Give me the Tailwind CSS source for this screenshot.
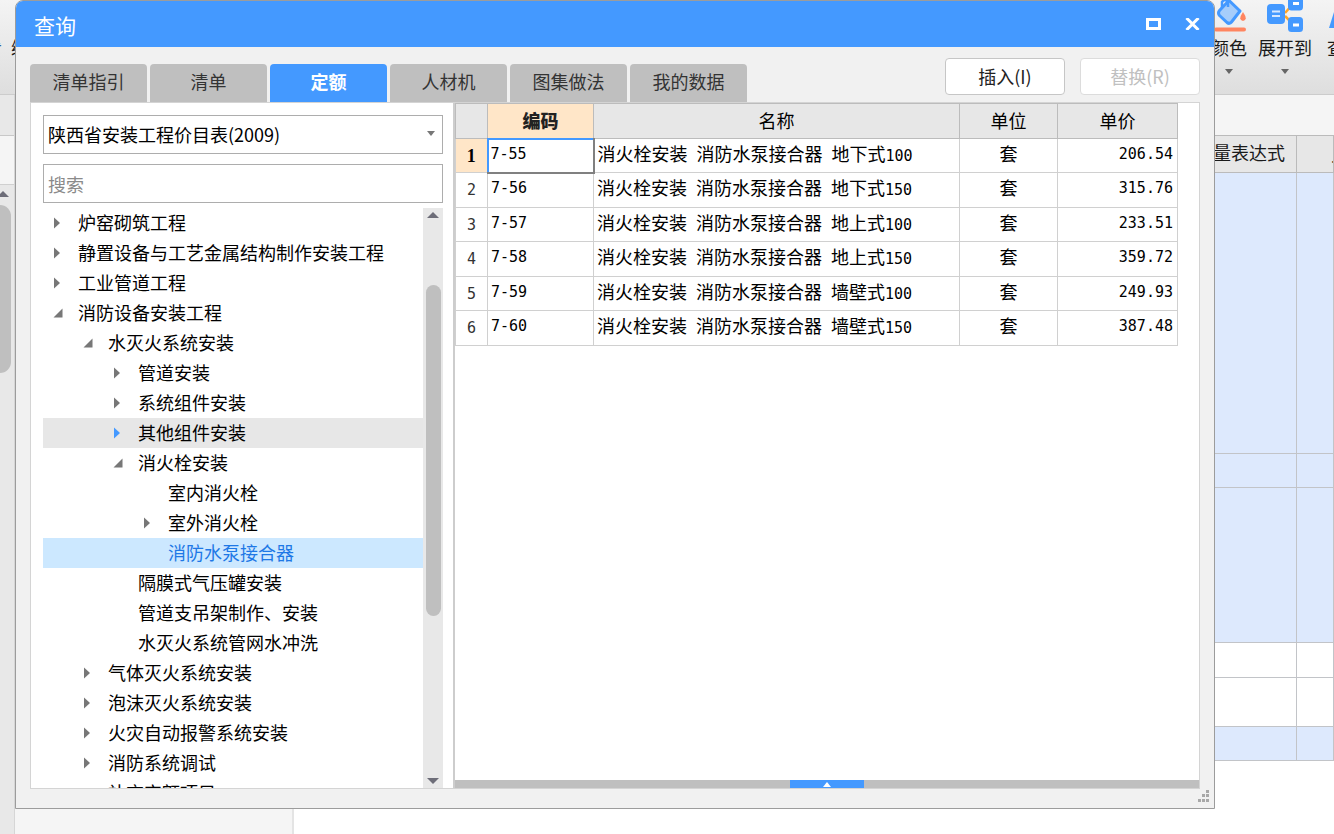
<!DOCTYPE html>
<html lang="zh-CN">
<head>
<meta charset="utf-8">
<title>查询</title>
<script src="https://cdn.jsdelivr.net/npm/@tailwindcss/browser@4"></script>
</head>
<body class="relative h-screen overflow-hidden bg-white font-['Noto_Sans_CJK_SC',sans-serif] text-lg leading-[30px] text-[#1a1a1a]">

<svg class="hidden">
  <symbol id="closed" viewBox="0 0 10 12"><path d="M1 0.5 7 6 1 11.5z" fill="currentColor"/></symbol>
  <symbol id="open" viewBox="0 0 10 10"><path d="M9.5 0.5v9H0.5z" fill="currentColor"/></symbol>
  <symbol id="down" viewBox="0 0 12 6"><path d="M0 0h12L6 6z" fill="currentColor"/></symbol>
  <symbol id="up" viewBox="0 0 12 6"><path d="M0 6h12L6 0z" fill="currentColor"/></symbol>
</svg>

<!-- Main application window -->
<div class="flex h-full flex-col">
  <header class="flex h-[95px] shrink-0 justify-between border-b border-[#cccccc] bg-linear-to-b from-[#f4f4f4] to-[#dedede]">
    <div class="flex w-[15px] justify-end overflow-hidden pt-8 whitespace-nowrap">
      <div class="flex w-[15px] shrink-0 justify-between overflow-hidden"><span class="flex w-[2px] justify-end overflow-hidden text-[#2c5fa0]">看</span><span class="w-[4px] overflow-hidden">编</span></div>
    </div>
    <div class="flex w-[123px] gap-[11px] overflow-hidden whitespace-nowrap">
      <button class="flex w-9 shrink-0 flex-col items-center">
        <svg class="h-8 w-[34px] shrink-0" viewBox="0 0 34 32" fill="none"><path d="M17 0.500 28 11 19.500 22Q17.500 24.500 15 22.500L7.500 15.500Q5.500 13 7.500 10.500Z" fill="#a6cdfb" stroke="#4499ff" stroke-width="3" stroke-linejoin="round"/><path d="M10 8V2Q13-2 16 2v5" stroke="#4499ff" stroke-width="2.500"/><path d="M31 12q5.500 8 0 9q-5.500-1 0-9z" fill="#ff8560"/><path d="M4 29.500h28" stroke="#ff8560" stroke-width="4" stroke-linecap="round"/></svg>
        <span>颜色</span>
        <svg class="mt-[7px] h-[5px] w-2 text-[#666]" viewBox="0 0 8 5"><path d="M0 0h8L4 5z" fill="currentColor"/></svg>
      </button>
      <button class="flex w-[54px] shrink-0 flex-col items-center">
        <svg class="h-8 w-[38px] shrink-0" viewBox="0 0 38 32" fill="none"><path d="M19 13 26 5M19 16l7 7" stroke="#ffa526" stroke-width="2.500"/><rect x="1" y="4" width="18" height="20" rx="4" fill="#4499ff"/><path d="M6 11.500h8M6 16h8" stroke="#d6e8ff" stroke-width="2"/><rect x="22" y="-4" width="15" height="14.500" rx="3.500" fill="#4499ff"/><rect x="22" y="17" width="15" height="15" rx="3.500" fill="#4499ff"/><path d="M27 3.500h6M27 25h6" stroke="#fff" stroke-width="3"/></svg>
        <span>展开到</span>
        <svg class="mt-[7px] h-[5px] w-2 text-[#666]" viewBox="0 0 8 5"><path d="M0 0h8L4 5z" fill="currentColor"/></svg>
      </button>
      <button class="ml-1 flex w-9 shrink-0 flex-col items-start">
        <svg class="h-8 w-8 shrink-0" viewBox="0 0 32 32"><path d="M2 28 7 12Q9 7 14 7h12v21z" fill="#4499ff"/></svg>
        <span>查找</span>
      </button>
    </div>
  </header>
  <div class="flex min-h-0 flex-1">
    <aside class="flex w-[15px] shrink-0 flex-col border-r border-[#d6d6d6] bg-[#e8e8e8]">
      <div class="h-[41px] border-b border-[#c8c8c8]"></div>
      <div class="h-[49px] border-b border-[#d0d0d0] bg-[#f5f5f5]"></div>
      <svg class="mt-[6px] -ml-[3px] h-[6px] w-3 text-[#6d6d78]"><use href="#up"/></svg>
      <div class="mt-2 h-[168px] w-[11px] rounded-r-full bg-[#bfbfbf]"></div>
    </aside>
    <div class="flex min-w-0 flex-1 flex-col">
      <div class="h-10 shrink-0 bg-[#f5f5f5]"></div>
      <table class="w-full shrink-0 table-fixed border-collapse border-y border-[#c0c2c6] bg-white">
        <colgroup><col><col class="w-[37px]"></colgroup>
        <thead><tr class="h-[37px] bg-[#e7e7e7]"><th class="border border-[#bbb] p-0 pr-[11px] pb-1 text-right font-normal">量表达式</th><th class="overflow-hidden border border-[#bbb] p-0 pl-[34px] text-left font-normal">人</th></tr></thead>
        <tbody>
          <tr class="h-[281px] bg-[#dde9fd]"><td class="border border-[#c2c4c8]"></td><td class="border border-[#c2c4c8]"></td></tr>
          <tr class="h-[34px] bg-[#dde9fd]"><td class="border border-[#c2c4c8]"></td><td class="border border-[#c2c4c8]"></td></tr>
          <tr class="h-[155px] bg-[#dde9fd]"><td class="border border-[#c2c4c8]"></td><td class="border border-[#c2c4c8]"></td></tr>
          <tr class="h-[35px]"><td class="border border-[#c2c4c8]"></td><td class="border border-[#c2c4c8]"></td></tr>
          <tr class="h-[49px]"><td class="border border-[#c2c4c8]"></td><td class="border border-[#c2c4c8]"></td></tr>
          <tr class="h-[34px] bg-[#dde9fd]"><td class="border border-[#c2c4c8]"></td><td class="border border-[#c2c4c8]"></td></tr>
        </tbody>
      </table>
      <div class="w-[279px] flex-1 border-r-2 border-[#e4e4e4] bg-[#f5f5f5]"></div>
    </div>
  </div>
</div>

<!-- Query dialog -->
<section role="dialog" aria-labelledby="dialog-title" class="absolute top-0 right-[119px] bottom-[25px] left-[15px] flex flex-col overflow-hidden rounded-t-lg border border-[#9c9c9c] bg-[#f1f1f1]">
  <header class="flex h-[46px] shrink-0 items-center justify-between bg-[#4499ff] pr-[14px] pl-[18px] text-white">
    <h1 id="dialog-title" class="pt-0.5 text-[21px]">查询</h1>
    <div class="flex items-center gap-6">
      <button aria-label="最大化"><svg class="h-3 w-[15px]" viewBox="0 0 15 12" fill="none"><rect x="1.500" y="1.500" width="12" height="9" stroke="#fff" stroke-width="3"/></svg></button>
      <button aria-label="关闭"><svg class="h-3 w-[15px]" viewBox="0 0 15 12"><path d="M1.500 0 13.500 12M13.500 0 1.500 12" stroke="#fff" stroke-width="3"/></svg></button>
    </div>
  </header>

  <div class="flex h-[55px] shrink-0 items-end justify-between px-[14px]">
    <nav class="flex gap-[3px] text-[#333]">
      <button class="h-[38px] w-[117px] rounded-t bg-[#bfbfbf] pb-1">清单指引</button>
      <button class="h-[38px] w-[117px] rounded-t bg-[#bfbfbf] pb-1">清单</button>
      <button class="h-[38px] w-[117px] rounded-t bg-[#4499ff] pb-1 font-bold text-white">定额</button>
      <button class="h-[38px] w-[117px] rounded-t bg-[#bfbfbf] pb-1">人材机</button>
      <button class="h-[38px] w-[117px] rounded-t bg-[#bfbfbf] pb-1">图集做法</button>
      <button class="h-[38px] w-[117px] rounded-t bg-[#bfbfbf] pb-1">我的数据</button>
    </nav>
    <div class="flex gap-[15px] pb-[7px]">
      <button class="h-[37px] w-[120px] rounded border border-[#c6c6c6] bg-white pb-0.5 text-[#222]">插入(I)</button>
      <button disabled class="h-[37px] w-[120px] rounded border border-[#dcdcdc] bg-white pb-0.5 text-[#c0c0c0]">替换(R)</button>
    </div>
  </div>

  <div class="mx-[14px] mb-[19px] flex min-h-0 flex-1 border border-[#d4d4d4] bg-white">
    <div class="flex w-[422px] shrink-0 flex-col pt-3 pr-[10px] pl-3">
      <div class="relative shrink-0">
        <select aria-label="价目表" class="block h-[39px] w-full appearance-none border border-[#adadad] bg-white px-1 pb-0.5 text-black">
          <option>陕西省安装工程价目表(2009)</option>
        </select>
        <svg class="pointer-events-none absolute top-4 right-2 h-[5px] w-2 text-[#777]" viewBox="0 0 8 5"><path d="M0 0h8L4 5z" fill="currentColor"/></svg>
      </div>
      <input type="text" aria-label="搜索" placeholder="搜索" class="mt-[10px] block h-[39px] w-full shrink-0 border border-[#adadad] px-1 placeholder:text-[#8a8a8a]">
      <div class="mt-[5px] flex min-h-0 flex-1">
        <ul role="tree" aria-label="定额目录" class="min-w-0 flex-1 overflow-hidden leading-7 whitespace-nowrap text-black">
          <li role="treeitem" class="flex h-[30px] items-center gap-[15px] pl-[10px]"><svg class="h-3 w-[10px] text-[#777]"><use href="#closed"/></svg><span class="pb-0.5">炉窑砌筑工程</span></li>
          <li role="treeitem" class="flex h-[30px] items-center gap-[15px] pl-[10px]"><svg class="h-3 w-[10px] text-[#777]"><use href="#closed"/></svg><span class="pb-0.5">静置设备与工艺金属结构制作安装工程</span></li>
          <li role="treeitem" class="flex h-[30px] items-center gap-[15px] pl-[10px]"><svg class="h-3 w-[10px] text-[#777]"><use href="#closed"/></svg><span class="pb-0.5">工业管道工程</span></li>
          <li role="treeitem" aria-expanded="true" class="flex h-[30px] items-center gap-[15px] pl-[10px]"><svg class="h-[10px] w-[10px] text-[#777]"><use href="#open"/></svg><span class="pb-0.5">消防设备安装工程</span></li>
          <li role="treeitem" aria-expanded="true" class="flex h-[30px] items-center gap-[15px] pl-10"><svg class="h-[10px] w-[10px] text-[#777]"><use href="#open"/></svg><span class="pb-0.5">水灭火系统安装</span></li>
          <li role="treeitem" class="flex h-[30px] items-center gap-[15px] pl-[70px]"><svg class="h-3 w-[10px] text-[#777]"><use href="#closed"/></svg><span class="pb-0.5">管道安装</span></li>
          <li role="treeitem" class="flex h-[30px] items-center gap-[15px] pl-[70px]"><svg class="h-3 w-[10px] text-[#777]"><use href="#closed"/></svg><span class="pb-0.5">系统组件安装</span></li>
          <li role="treeitem" class="flex h-[30px] items-center gap-[15px] bg-[#e7e7e7] pl-[70px]"><svg class="h-3 w-[10px] text-[#4499ff]"><use href="#closed"/></svg><span class="pb-0.5">其他组件安装</span></li>
          <li role="treeitem" aria-expanded="true" class="flex h-[30px] items-center gap-[15px] pl-[70px]"><svg class="h-[10px] w-[10px] text-[#777]"><use href="#open"/></svg><span class="pb-0.5">消火栓安装</span></li>
          <li role="treeitem" class="h-[30px] pl-[125px]">室内消火栓</li>
          <li role="treeitem" class="flex h-[30px] items-center gap-[15px] pl-[100px]"><svg class="h-3 w-[10px] text-[#777]"><use href="#closed"/></svg><span class="pb-0.5">室外消火栓</span></li>
          <li role="treeitem" aria-selected="true" class="h-[30px] bg-[#cce8ff] pl-[125px] text-[#1e78e6]">消防水泵接合器</li>
          <li role="treeitem" class="h-[30px] pl-[95px]">隔膜式气压罐安装</li>
          <li role="treeitem" class="h-[30px] pl-[95px]">管道支吊架制作、安装</li>
          <li role="treeitem" class="h-[30px] pl-[95px]">水灭火系统管网水冲洗</li>
          <li role="treeitem" class="flex h-[30px] items-center gap-[15px] pl-10"><svg class="h-3 w-[10px] text-[#777]"><use href="#closed"/></svg><span class="pb-0.5">气体灭火系统安装</span></li>
          <li role="treeitem" class="flex h-[30px] items-center gap-[15px] pl-10"><svg class="h-3 w-[10px] text-[#777]"><use href="#closed"/></svg><span class="pb-0.5">泡沫灭火系统安装</span></li>
          <li role="treeitem" class="flex h-[30px] items-center gap-[15px] pl-10"><svg class="h-3 w-[10px] text-[#777]"><use href="#closed"/></svg><span class="pb-0.5">火灾自动报警系统安装</span></li>
          <li role="treeitem" class="flex h-[30px] items-center gap-[15px] pl-10"><svg class="h-3 w-[10px] text-[#777]"><use href="#closed"/></svg><span class="pb-0.5">消防系统调试</span></li>
          <li role="treeitem" class="h-[30px] pl-[65px]">补充定额项目</li>
        </ul>
        <div class="flex w-5 shrink-0 flex-col items-center bg-[#e8e8e8] py-1">
          <svg class="h-[6px] w-3 shrink-0 text-[#6d6d78]"><use href="#up"/></svg>
          <div class="flex min-h-0 w-full flex-1 flex-col items-center"><div class="basis-[12%]"></div><div class="w-[15px] basis-[59%] rounded-full bg-[#bfbfbf]"></div></div>
          <svg class="h-[6px] w-3 shrink-0 text-[#6d6d78]"><use href="#down"/></svg>
        </div>
      </div>
    </div>

    <div class="flex min-w-0 flex-1 flex-col border-l-2 border-[#cdcdcd]">
      <div class="min-h-0 flex-1 pr-[21px]">
        <table class="w-full table-fixed border-collapse text-black">
          <colgroup><col class="w-8"><col class="w-[106px]"><col><col class="w-[98px]"><col class="w-[120px]"></colgroup>
          <thead>
            <tr class="h-[35px] bg-[#e7e7e7]">
              <td class="border border-[#bcbcbc] p-0"></td>
              <th class="border border-[#bcbcbc] bg-[#ffe6c8] p-0 pb-0.5 font-black text-[#222]">编码</th>
              <th class="border border-[#bcbcbc] p-0 pb-0.5 font-normal">名称</th>
              <th class="border border-[#bcbcbc] p-0 pb-0.5 font-normal">单位</th>
              <th class="border border-[#bcbcbc] p-0 pb-0.5 font-normal">单价</th>
            </tr>
          </thead>
          <tbody>
            <tr class="h-[34px]">
              <th class="border border-[#d0d0d0] bg-[#ffe6c8] p-0 font-['Liberation_Serif',serif] text-lg leading-6 font-bold">1</th>
              <td class="border-2 border-t-[#4499ff] border-r-[#808080] border-b-[#808080] border-l-[#4499ff] p-0 pb-1 pl-[2px] font-['DejaVu_Sans_Mono',monospace] text-[15px] leading-6">7-55</td>
              <td class="border border-[#d0d0d0] p-0 pb-1.5 pl-[3px] leading-6">消火栓安装<span class="font-['DejaVu_Sans_Mono',monospace] text-[15px] leading-none"> </span>消防水泵接合器<span class="font-['DejaVu_Sans_Mono',monospace] text-[15px] leading-none"> </span>地下式<span class="font-['DejaVu_Sans_Mono',monospace] text-[15px] leading-none">100</span></td>
              <td class="border border-[#d0d0d0] p-0 pb-1.5 text-center leading-6">套</td>
              <td class="border border-[#d0d0d0] p-0 pr-1 pb-1 text-right font-['DejaVu_Sans_Mono',monospace] text-[15px] leading-6">206.54</td>
            </tr>
            <tr class="h-[35px]">
              <th class="border border-[#d0d0d0] p-0 font-['DejaVu_Sans_Mono',monospace] text-[15px] leading-6 font-normal text-[#333]">2</th>
              <td class="border border-[#d0d0d0] p-0 pb-1 pl-[3px] font-['DejaVu_Sans_Mono',monospace] text-[15px] leading-6">7-56</td>
              <td class="border border-[#d0d0d0] p-0 pb-1.5 pl-[3px] leading-6">消火栓安装<span class="font-['DejaVu_Sans_Mono',monospace] text-[15px] leading-none"> </span>消防水泵接合器<span class="font-['DejaVu_Sans_Mono',monospace] text-[15px] leading-none"> </span>地下式<span class="font-['DejaVu_Sans_Mono',monospace] text-[15px] leading-none">150</span></td>
              <td class="border border-[#d0d0d0] p-0 pb-1.5 text-center leading-6">套</td>
              <td class="border border-[#d0d0d0] p-0 pr-1 pb-1 text-right font-['DejaVu_Sans_Mono',monospace] text-[15px] leading-6">315.76</td>
            </tr>
            <tr class="h-[34px]">
              <th class="border border-[#d0d0d0] p-0 font-['DejaVu_Sans_Mono',monospace] text-[15px] leading-6 font-normal text-[#333]">3</th>
              <td class="border border-[#d0d0d0] p-0 pb-1 pl-[3px] font-['DejaVu_Sans_Mono',monospace] text-[15px] leading-6">7-57</td>
              <td class="border border-[#d0d0d0] p-0 pb-1.5 pl-[3px] leading-6">消火栓安装<span class="font-['DejaVu_Sans_Mono',monospace] text-[15px] leading-none"> </span>消防水泵接合器<span class="font-['DejaVu_Sans_Mono',monospace] text-[15px] leading-none"> </span>地上式<span class="font-['DejaVu_Sans_Mono',monospace] text-[15px] leading-none">100</span></td>
              <td class="border border-[#d0d0d0] p-0 pb-1.5 text-center leading-6">套</td>
              <td class="border border-[#d0d0d0] p-0 pr-1 pb-1 text-right font-['DejaVu_Sans_Mono',monospace] text-[15px] leading-6">233.51</td>
            </tr>
            <tr class="h-[35px]">
              <th class="border border-[#d0d0d0] p-0 font-['DejaVu_Sans_Mono',monospace] text-[15px] leading-6 font-normal text-[#333]">4</th>
              <td class="border border-[#d0d0d0] p-0 pb-1 pl-[3px] font-['DejaVu_Sans_Mono',monospace] text-[15px] leading-6">7-58</td>
              <td class="border border-[#d0d0d0] p-0 pb-1.5 pl-[3px] leading-6">消火栓安装<span class="font-['DejaVu_Sans_Mono',monospace] text-[15px] leading-none"> </span>消防水泵接合器<span class="font-['DejaVu_Sans_Mono',monospace] text-[15px] leading-none"> </span>地上式<span class="font-['DejaVu_Sans_Mono',monospace] text-[15px] leading-none">150</span></td>
              <td class="border border-[#d0d0d0] p-0 pb-1.5 text-center leading-6">套</td>
              <td class="border border-[#d0d0d0] p-0 pr-1 pb-1 text-right font-['DejaVu_Sans_Mono',monospace] text-[15px] leading-6">359.72</td>
            </tr>
            <tr class="h-[34px]">
              <th class="border border-[#d0d0d0] p-0 font-['DejaVu_Sans_Mono',monospace] text-[15px] leading-6 font-normal text-[#333]">5</th>
              <td class="border border-[#d0d0d0] p-0 pb-1 pl-[3px] font-['DejaVu_Sans_Mono',monospace] text-[15px] leading-6">7-59</td>
              <td class="border border-[#d0d0d0] p-0 pb-1.5 pl-[3px] leading-6">消火栓安装<span class="font-['DejaVu_Sans_Mono',monospace] text-[15px] leading-none"> </span>消防水泵接合器<span class="font-['DejaVu_Sans_Mono',monospace] text-[15px] leading-none"> </span>墙壁式<span class="font-['DejaVu_Sans_Mono',monospace] text-[15px] leading-none">100</span></td>
              <td class="border border-[#d0d0d0] p-0 pb-1.5 text-center leading-6">套</td>
              <td class="border border-[#d0d0d0] p-0 pr-1 pb-1 text-right font-['DejaVu_Sans_Mono',monospace] text-[15px] leading-6">249.93</td>
            </tr>
            <tr class="h-[35px]">
              <th class="border border-[#d0d0d0] p-0 font-['DejaVu_Sans_Mono',monospace] text-[15px] leading-6 font-normal text-[#333]">6</th>
              <td class="border border-[#d0d0d0] p-0 pb-1 pl-[3px] font-['DejaVu_Sans_Mono',monospace] text-[15px] leading-6">7-60</td>
              <td class="border border-[#d0d0d0] p-0 pb-1.5 pl-[3px] leading-6">消火栓安装<span class="font-['DejaVu_Sans_Mono',monospace] text-[15px] leading-none"> </span>消防水泵接合器<span class="font-['DejaVu_Sans_Mono',monospace] text-[15px] leading-none"> </span>墙壁式<span class="font-['DejaVu_Sans_Mono',monospace] text-[15px] leading-none">150</span></td>
              <td class="border border-[#d0d0d0] p-0 pb-1.5 text-center leading-6">套</td>
              <td class="border border-[#d0d0d0] p-0 pr-1 pb-1 text-right font-['DejaVu_Sans_Mono',monospace] text-[15px] leading-6">387.48</td>
            </tr>
          </tbody>
        </table>
      </div>
      <div class="flex h-2 shrink-0 justify-center bg-[#bfbfbf]">
        <button aria-label="展开" class="flex h-2 w-[74px] items-center justify-center bg-[#4499ff]"><svg class="h-[5px] w-2" viewBox="0 0 8 5"><path d="M4 0 8 5H0z" fill="#fff"/></svg></button>
      </div>
    </div>
  </div>

  <svg class="absolute right-1 bottom-[5px] h-[13px] w-3" viewBox="0 0 12 13" fill="#a8a8a8"><path d="M8 0h3v3H8zM4 4h3v3H4zM8 4h3v3H8zM0 9h3v3H0zM4 9h3v3H4zM8 9h3v3H8z"/></svg>
</section>
</body>
</html>
